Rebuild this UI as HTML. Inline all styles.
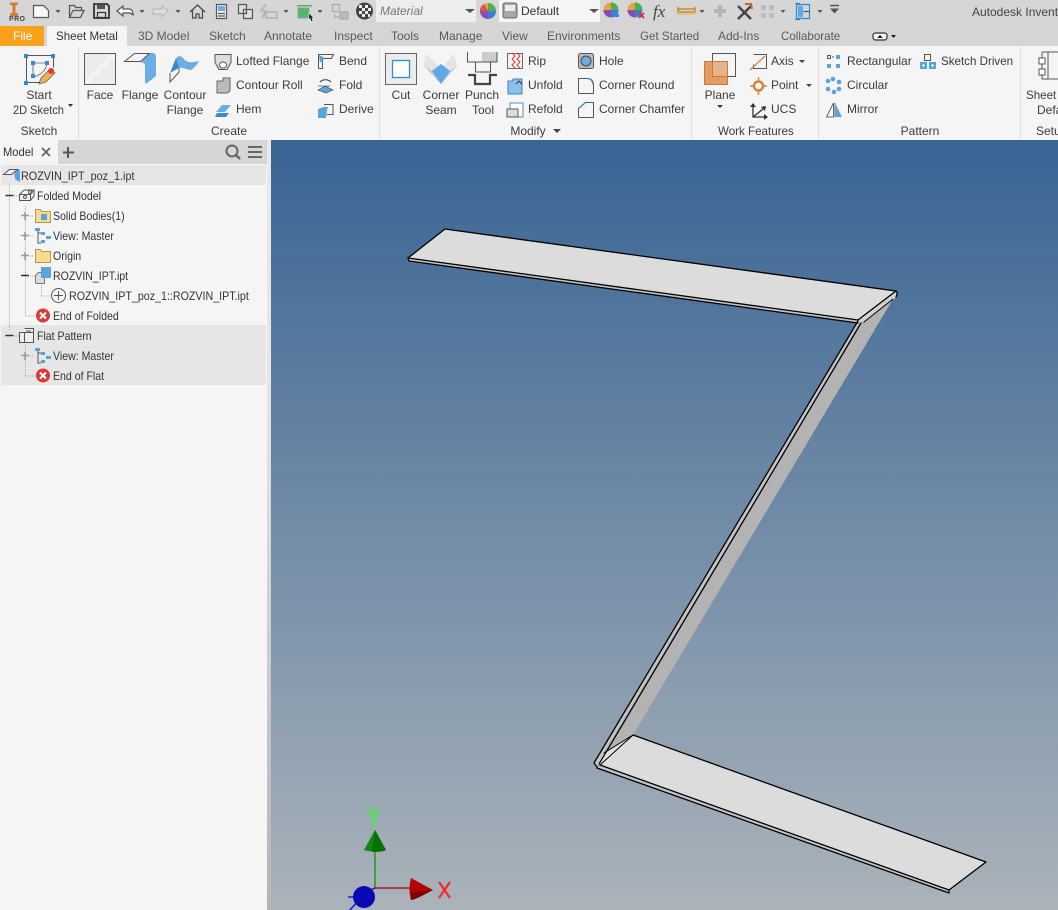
<!DOCTYPE html>
<html><head><meta charset="utf-8"><style>
html,body{margin:0;padding:0}
body{width:1058px;height:910px;overflow:hidden;position:relative;background:#f5f5f5;font-family:"Liberation Sans",sans-serif;font-size:12px;color:#3b3b3b}
.t{position:absolute;white-space:nowrap;line-height:14px;height:14px}
.c{transform:translateX(-50%)}
.g{color:#5a5a5a}
.a{position:absolute;left:0;top:0}
.s{transform:scaleX(.88);transform-origin:0 50%;color:#333}
.q{transform:scaleX(.965);transform-origin:0 50%}
</style></head><body>
<div style="position:absolute;left:0;top:0;width:1058px;height:46px;background:#d6d6d6"></div>
<div style="position:absolute;left:0;top:46px;width:1058px;height:94px;background:#f5f5f5"></div>
<div style="position:absolute;left:0;top:26px;width:44px;height:20px;background:#f9a11b"></div>
<div style="position:absolute;left:47px;top:26px;width:80px;height:20px;background:#f5f5f5"></div>
<div style="position:absolute;left:376px;top:0;width:100px;height:22px;background:#ededed"></div>
<div style="position:absolute;left:499px;top:0;width:101px;height:22px;background:#f5f5f5"></div>
<span class="t" style="left:380px;top:4px;font-style:italic;color:#777">Material</span>
<span class="t" style="left:521px;top:4px;color:#333">Default</span>
<span class="t" style="left:972px;top:5px;color:#444">Autodesk Invent</span>
<span class="t" style="left:13px;top:29px;color:#fff">File</span>
<span class="t q" style="left:56px;top:29px;color:#333">Sheet Metal</span>
<span class="t g" style="left:138px;top:29px">3D Model</span>
<span class="t g" style="left:209px;top:29px">Sketch</span>
<span class="t g" style="left:264px;top:29px">Annotate</span>
<span class="t g" style="left:334px;top:29px">Inspect</span>
<span class="t g" style="left:391px;top:29px">Tools</span>
<span class="t g" style="left:439px;top:29px">Manage</span>
<span class="t g" style="left:502px;top:29px">View</span>
<span class="t g" style="left:547px;top:29px">Environments</span>
<span class="t g q" style="left:640px;top:29px">Get Started</span>
<span class="t g" style="left:718px;top:29px">Add-Ins</span>
<span class="t g q" style="left:781px;top:29px">Collaborate</span>
<span class="t" style="left:9px;top:16px;font-size:7px;font-weight:bold;color:#444;line-height:8px;height:8px;letter-spacing:.4px">PRO</span>

<svg class="a" width="1058" height="140" viewBox="0 0 1058 140">
<path d="M10 2.500h8v2.500h-2.500v8h2.500v3h-8v-3h2.500v-8h-2.500z" fill="#cf7f33"/>
<g fill="none" stroke="#555" stroke-width="1.200">
<path d="M33.500 5.500h10l5 5v7h-15z" fill="#f7f7f7"/>
<path d="M69.500 17.500v-12h5l1 2h6v3M69.500 17.500h11l3.500-7h-11z"/>
<path d="M94 4h13l2 2v12h-15z" stroke="#333" stroke-width="1.800"/>
<path d="M97 5h8v4h-8z" fill="#555" stroke="none"/><path d="M97.500 12.500h8v5h-8z" fill="#ddd" stroke="#333"/>
<path d="M117 11l6-5v3h6c3 0 4 2 4 6-2-2-3-2-4-2h-6v3z" fill="#f5f5f5"/>
<path d="M168 11l-6-5v3h-9v5h9v3z" fill="#ddd" stroke="#bbb"/>
<path d="M190 12l7.500-7 7.500 7M192.500 10.500v7.500h3.500v-4h3v4h3.500v-7.500" stroke="#444"/>
<path d="M216.500 4.500h10v14h-10z" fill="#f0f0f0"/><path d="M218 6h7v5h-7z" fill="#6aaee4" stroke="none"/><path d="M218 13.500h7M218 16h7"/>
<path d="M238.500 4.500h8v9h-8zM243.500 9.500h9v9h-9z" fill="#ddd"/>
<path d="M266 4l-5 7h4l-3 7 4-5" stroke="#bbb" stroke-width="2"/><path d="M266 12h11v6h-11z" stroke="#aaa"/>
<path d="M297 5h15v1.500h-15z" fill="#54b46a" stroke="none"/><path d="M297.500 7.500h12v11h-12z" fill="#54b46a" stroke="#bbb"/>
<path d="M309 13l5 5-2 0 1 3-2 .5-1-3-1.500 1.500z" fill="#222" stroke="#eee" stroke-width=".6"/>
<path d="M332.500 4.500h7v7h-7z" stroke="#aaa"/><path d="M340 12h8v7h-8z" fill="#bbb" stroke="#aaa"/><path d="M335 14v3h4" stroke="#aaa"/>
<path d="M678 9h17M678 7v5h17v-5" stroke="#c98a2a" stroke-width="1.500"/><path d="M678 12v2h17v-2" stroke="#e0b060" stroke-width="1"/>
<path d="M796.500 4.500h13v14h-13zM795 3.500h5M795 19.500h5" stroke="#2f8bd6"/><path d="M798 6h5v11h-5z" fill="#5ba9e6" stroke="none"/><path d="M803.500 11.500h6" stroke="#555"/>
<path d="M830 5.500h9" stroke-width="1.500"/>
</g>
<g fill="#555">
<path d="M55.500 10h5l-2.500 3zM139.500 10h5l-2.500 3zM175.500 10h5l-2.500 3zM283.500 10h5l-2.500 3zM317.500 10h5l-2.500 3zM699.500 10h5l-2.500 3zM780.500 10h5l-2.500 3zM817.500 10h5l-2.500 3zM830 8.500h9l-4.500 5zM465 9h10l-5 4zM589 9h10l-5 4z"/>
</g>
<g>
<circle cx="488" cy="11" r="8" fill="#e8a33c"/><path d="M488 11V3A8 8 0 0 1 496 11z" fill="#4bb04f"/><path d="M488 11h8A8 8 0 0 1 488 19z" fill="#3a7fd5"/><path d="M488 11v8A8 8 0 0 1 480 11z" fill="#8a4db0"/><path d="M488 11h-8A8 8 0 0 1 484 4z" fill="#e05050"/>
<circle cx="611" cy="10" r="7.500" fill="#e8a33c"/><path d="M611 10V2.500A7.500 7.500 0 0 1 618.500 10z" fill="#4bb04f"/><path d="M611 10h7.500A7.500 7.500 0 0 1 611 17.500z" fill="#3a7fd5"/><path d="M611 10v7.500A7.500 7.500 0 0 1 603.500 10z" fill="#8a4db0"/><rect x="614" y="14" width="5" height="3" fill="#2f8bd6"/>
<circle cx="635" cy="10" r="7.500" fill="#e8a33c"/><path d="M635 10V2.500A7.500 7.500 0 0 1 642.500 10z" fill="#4bb04f"/><path d="M635 10h7.500A7.500 7.500 0 0 1 635 17.500z" fill="#3a7fd5"/><path d="M635 10v7.500A7.500 7.500 0 0 1 627.500 10z" fill="#8a4db0"/><path d="M639 13l5 5M644 13l-5 5" stroke="#d9302a" stroke-width="1.800"/>
<rect x="503" y="3" width="14" height="15" rx="2" fill="#a8a8a8" stroke="#666"/><rect x="505" y="5" width="10" height="6" fill="#ececec"/>
<circle cx="364.500" cy="11" r="8.500" fill="#444"/><path d="M359 5h3v3h-3zM365 5h3v3h-3zM362 8h3v3h-3zM368 8h3v3h-3zM359 11h3v3h-3zM365 11h3v3h-3zM362 14h3v3h-3zM368 14h2v3h-2z" fill="#eee"/>
<path d="M714 11h12M720 5v12" stroke="#b5b5b5" stroke-width="4"/>
<path d="M738 6l13 13" stroke="#444" stroke-width="2.500"/><path d="M751 6l-13 13" stroke="#444" stroke-width="2.500"/><path d="M745 4h6l1 5" stroke="#c06a2a" stroke-width="2" fill="none"/>
<path d="M761 5h5v5h-5zM769 5h5v5h-5zM761 13h5v5h-5zM769 13h5v5h-5z" fill="#bdbdbd"/>
</g>
<text x="653" y="17" font-family="Liberation Serif,serif" font-style="italic" font-size="17" fill="#444">fx</text>
<rect x="873" y="33" width="14" height="7" rx="2.500" fill="#f5f5f5" stroke="#333" stroke-width="1.200"/><path d="M877 38h6l-3-3zM891 35h5l-2.500 3z" fill="#222"/>

<path d="M78.500 47v92M379.500 47v92M691.500 47v92M818.500 47v92M1020.500 47v92" stroke="#ddd"/>

<!-- Start 2D sketch -->
<path d="M26.500 55.500h27v12M26.500 55.500v27h15" fill="none" stroke="#555"/>
<path d="M33 63v14h0M47 63c-1 8-6 12-14 14" fill="none" stroke="#777"/><path d="M33 63h14" stroke="#888"/>
<path d="M24 54h4v4h-4zM51 54h4v4h-4zM24 81h4v4h-4zM31 61h4v4h-4zM45 61h4v4h-4zM31 74h4v4h-4z" fill="#2f8bd6"/>
<path d="M39 84l2-6 9-9 5 4-9 9z" fill="#e6b45a" stroke="#555" stroke-width=".7"/><circle cx="51" cy="71" r="3" fill="#e33"/>
<path d="M68 104h5l-2.500 3z" fill="#333"/>

<!-- Face / Flange / Contour -->
<rect x="84.500" y="53.500" width="31" height="31" fill="#ececec" stroke="#555"/><path d="M85 81l27-27h3v3l-27 27z" fill="#f5f5f5"/>
<path d="M140 62l10-9h3c2 0 3 2 3 4v19l-10 8-1-2 0-16c0-2-2-4-5-4z" fill="#6aaee4"/>
<path d="M124.500 61.500l10-8h15l-9 8z" fill="#f5f5f5" stroke="#555"/>
<path d="M176 58c3-3 5-2 7 0 4 5 8 5 16 3-2 4-5 7-8 9-4 0-8-3-12-2z" fill="#6aaee4"/>
<path d="M170 73l6-15 3 10-9 5z" fill="#3f86c4"/>
<path d="M170 73v9l9-10v-4" fill="#f5f5f5" stroke="#555"/>

<!-- small create icons -->
<path d="M215 54.500h16v8l-4 7h-8l-4-7z" fill="#ddd" stroke="#555"/><ellipse cx="223" cy="65" rx="3.500" ry="3" fill="#fff" stroke="#555"/>
<path d="M217 81h6v-3h7v13l-3 2h-10z" fill="#bbb" stroke="#666"/>
<path d="M216 112l6-7h9l-6 7z" fill="#6aaee4"/><path d="M215 117l2-4h12l-3 4z" fill="#3f86c4"/>
<path d="M318.500 54.500h15l-2 4h-9v10h-4z" fill="#f5f5f5" stroke="#555"/><path d="M319 55l6 3-5 5z" fill="#5ba3dc"/>
<path d="M320 82a7 6 0 0 1 11 0" fill="none" stroke="#333"/><path d="M318 86h12M318 90l7-4 8 4-7 3z" fill="#5ba3dc" stroke="#555" stroke-width=".7"/>
<path d="M324 104.500h9v10h-6" fill="none" stroke="#555"/><path d="M324 107l4 0-1 3 -1 8h-8v-9z" fill="#5ba3dc"/>

<!-- Cut / seam / punch -->
<rect x="385.500" y="53.500" width="31" height="31" fill="#ececec" stroke="#666"/>
<rect x="392.500" y="60.500" width="17" height="17" fill="#fff" stroke="#2f8bd6" stroke-width="1.300"/>
<path d="M426 54l15 15 13-15 3 12-16 18-17-18z" fill="#c8c8c8"/><path d="M426 54l-2 12 8 5 9-2zM454 54l3 12-7 5-9-2z" fill="#e4e4e4"/>
<path d="M432 71l9-7 9 7-9 13z" fill="#5ba9e6"/>
<rect x="482" y="52" width="15" height="10" fill="#ccc"/>
<path d="M467.500 52v10h29.500v-10M475.500 62v10h15v-10" fill="none" stroke="#555"/>
<path d="M468 75h7v9h15v-9h7" fill="none" stroke="#444" stroke-width="2.200"/>

<!-- Rip etc -->
<rect x="507.500" y="53.500" width="15" height="15" fill="#f5f5f5" stroke="#666"/><path d="M512 53l3 3-3 3 3 3-3 3 3 3M517 53l3 3-3 3 3 3-3 3 3 3" fill="none" stroke="#d33"/>
<path d="M508 81h5v-2h9v15h-14z" fill="#8cc0ea" stroke="#3f86c4"/><path d="M516 84l3-3 3 3" fill="none" stroke="#333"/>
<path d="M510 103h13v14h-13z" fill="#fff" stroke="#4a90d0"/><path d="M507 109h11v8h-11z" fill="#ddd" stroke="#555"/>

<rect x="578.500" y="53.500" width="15" height="15" rx="2" fill="#bbb" stroke="#555"/><circle cx="586" cy="61" r="5" fill="#6aaee4" stroke="#444"/>
<path d="M578.500 93.500v-15h9c4 0 6 3 6 6v9z" fill="#f5f5f5" stroke="#555"/><path d="M587 78.500c4 0 6 3 6 6" fill="none" stroke="#2f8bd6" stroke-width="1.300"/>
<path d="M578.500 117.500v-9l7-6h8v15z" fill="#f5f5f5" stroke="#555"/><path d="M578.500 108.500l7-6" stroke="#2f8bd6" stroke-width="1.300"/>

<!-- Modify arrow -->
<path d="M553 129h8l-4 4z" fill="#444"/>

<!-- Plane -->
<rect x="712.500" y="53.500" width="23" height="23" fill="none" stroke="#555"/>
<rect x="704.500" y="61.500" width="23" height="23" fill="#e59b62" stroke="#c77b3a"/>
<rect x="712.500" y="61.500" width="15" height="15" fill="#e4b48e" stroke="#c77b3a"/>
<path d="M717 105h6l-3 3z" fill="#333"/>
<!-- Axis -->
<path d="M753.500 54.500h13v14h-13v-4" fill="none" stroke="#555"/><path d="M750 70l15-14" stroke="#d9823a" stroke-width="1.300"/>
<path d="M799 60h6l-3 3zM806 84h6l-3 3z" fill="#444"/>
<path d="M750 86h4M763 86h4M758.500 77v5M758.500 90v5" stroke="#d9823a" stroke-width="1.500"/><circle cx="758.500" cy="86" r="4.500" fill="#fff" stroke="#d9823a" stroke-width="2.500"/>
<path d="M753 104v13h13M753 117l10-8" fill="none" stroke="#333" stroke-width="1.300"/><path d="M750 107l3-4 3 4zM764 114l4 3-4 3zM761 107l5-1-1 5z" fill="#333"/>

<!-- Pattern icons -->
<g fill="#5ba3dc"><rect x="827.500" y="55.500" width="3" height="3" fill="none" stroke="#555"/><rect x="836" y="55" width="4" height="4"/><rect x="827" y="64" width="4" height="4"/><rect x="836" y="64" width="4" height="4"/>
<rect x="832" y="56.500" width="2" height="1" fill="#555"/><circle cx="833" cy="79" r="2.300"/><circle cx="839" cy="82" r="2.300"/><circle cx="828" cy="81" r="2.300"/><circle cx="839" cy="89" r="2.300"/><circle cx="834" cy="92" r="2.300"/><circle cx="828" cy="89" r="2.300"/>
<rect x="920" y="62" width="7" height="7"/><rect x="929" y="62" width="7" height="7"/></g>
<path d="M922 65.500h3M923.500 64v3M931 65.500h3M932.500 64v3" stroke="#fff"/>
<rect x="924.500" y="54.500" width="6" height="6" fill="none" stroke="#555"/>
<path d="M833.500 103v14h-7zM835 103v14" fill="#fff" stroke="#666"/><path d="M835 103l7 14h-7z" fill="#5ba3dc"/>

<!-- Sheet defaults -->
<path d="M1042 52h16M1042 52v27h16M1048 52v27" fill="none" stroke="#555"/><rect x="1039" y="58" width="6" height="6" fill="#fff" stroke="#555"/><rect x="1039" y="69" width="6" height="6" fill="#fff" stroke="#555"/>
</svg>

<span class="t c" style="left:39px;top:88px">Start</span>
<span class="t" style="left:13px;top:103px;transform:scaleX(.92);transform-origin:0 50%">2D Sketch</span>
<span class="t c" style="left:39px;top:124px">Sketch</span>
<span class="t c" style="left:100px;top:88px">Face</span>
<span class="t c" style="left:140px;top:88px">Flange</span>
<span class="t c" style="left:185px;top:88px">Contour</span>
<span class="t c" style="left:185px;top:103px">Flange</span>
<span class="t" style="left:236px;top:54px">Lofted Flange</span>
<span class="t" style="left:236px;top:78px">Contour Roll</span>
<span class="t" style="left:236px;top:102px">Hem</span>
<span class="t" style="left:339px;top:54px">Bend</span>
<span class="t" style="left:339px;top:78px">Fold</span>
<span class="t" style="left:339px;top:102px">Derive</span>
<span class="t c" style="left:229px;top:124px">Create</span>
<span class="t c" style="left:401px;top:88px">Cut</span>
<span class="t c" style="left:441px;top:88px">Corner</span>
<span class="t c" style="left:441px;top:103px">Seam</span>
<span class="t c" style="left:482px;top:88px">Punch</span>
<span class="t c" style="left:483px;top:103px">Tool</span>
<span class="t" style="left:528px;top:54px">Rip</span>
<span class="t" style="left:528px;top:78px">Unfold</span>
<span class="t" style="left:528px;top:102px">Refold</span>
<span class="t" style="left:599px;top:54px">Hole</span>
<span class="t" style="left:599px;top:78px">Corner Round</span>
<span class="t" style="left:599px;top:102px">Corner Chamfer</span>
<span class="t c" style="left:528px;top:124px">Modify</span>
<span class="t c" style="left:720px;top:88px">Plane</span>
<span class="t" style="left:771px;top:54px">Axis</span>
<span class="t" style="left:771px;top:78px">Point</span>
<span class="t" style="left:771px;top:102px">UCS</span>
<span class="t" style="left:718px;top:124px;transform:scaleX(.965);transform-origin:0 50%">Work Features</span>
<span class="t" style="left:847px;top:54px">Rectangular</span>
<span class="t" style="left:847px;top:78px">Circular</span>
<span class="t" style="left:847px;top:102px">Mirror</span>
<span class="t q" style="left:941px;top:54px">Sketch Driven</span>
<span class="t c" style="left:920px;top:124px">Pattern</span>
<span class="t q" style="left:1026px;top:88px">Sheet</span>
<span class="t" style="left:1037px;top:103px">Defa</span>
<span class="t" style="left:1036px;top:124px">Setu</span>

<!-- Left panel -->
<div style="position:absolute;left:0;top:140px;width:267px;height:770px;background:#f5f5f5"></div>
<div style="position:absolute;left:58px;top:140px;width:209px;height:24px;background:#d6d6d6"></div>
<div style="position:absolute;left:1px;top:165px;width:265px;height:20px;background:#e6e6e6"></div>
<div style="position:absolute;left:1px;top:325px;width:265px;height:60px;background:#e6e6e6"></div>
<div style="position:absolute;left:267px;top:140px;width:4px;height:770px;background:linear-gradient(#e8e8e8 0,#e4e4e4 35%,#b4b4b4 100%)"></div>
<span class="t" style="left:3px;top:145px;color:#333;transform:scaleX(.93);transform-origin:0 50%">Model</span>
<span class="t" style="left:21px;top:169px;color:#333;transform:scaleX(.9);transform-origin:0 50%">ROZVIN_IPT_poz_1.ipt</span>
<span class="t s" style="left:37px;top:189px">Folded Model</span>
<span class="t s" style="left:53px;top:209px">Solid Bodies(1)</span>
<span class="t s" style="left:53px;top:229px">View: Master</span>
<span class="t s" style="left:53px;top:249px">Origin</span>
<span class="t s" style="left:53px;top:269px">ROZVIN_IPT.ipt</span>
<span class="t" style="left:69px;top:289px;color:#333;transform:scaleX(.89);transform-origin:0 50%">ROZVIN_IPT_poz_1::ROZVIN_IPT.ipt</span>
<span class="t s" style="left:53px;top:309px">End of Folded</span>
<span class="t s" style="left:37px;top:329px">Flat Pattern</span>
<span class="t s" style="left:53px;top:349px">View: Master</span>
<span class="t s" style="left:53px;top:369px">End of Flat</span>

<svg class="a" style="top:140px" width="268" height="260" viewBox="0 140 268 260">
<path d="M42 148l8 8M50 148l-8 8" stroke="#666" stroke-width="1.800"/>
<path d="M68 147v11M63 152.500h11" stroke="#555" stroke-width="2"/>
<circle cx="232" cy="151" r="5.500" fill="none" stroke="#666" stroke-width="2"/><path d="M236 155l4 4" stroke="#666" stroke-width="2.500"/>
<path d="M248 147h14M248 152h14M248 157h14" stroke="#666" stroke-width="2"/>

<path d="M9.500 185V331M25.500 206V316h10M41.500 285V296h8M25.500 345V376h10M14 196h5M30 216h4M30 236h4M30 256h4M14 336h5M30 356h4M30 276h5" fill="none" stroke="#aaa" stroke-dasharray="1 1"/>
<path d="M5.500 195.500h8M5.500 335.500h8M21 275.500h8" stroke="#333" stroke-width="1.500"/>
<path d="M21 215.500h8M25 212v8M21 235.500h8M25 232v8M21 255.500h8M25 252v8M21 355.500h8M25 352v8" stroke="#999" stroke-width="1.500"/>

<path d="M14 169h4c1 0 2 1 2 2v11c-2-1-4-2-5-3z" fill="#5ba3dc"/><path d="M3.500 174.500l6-5h8l-6 5z" fill="#f0f0f0" stroke="#555"/>
<path d="M19.500 194.500h11v6h-11zM24 190h10v6l-3 4M19.500 194.500l4.500-4.500M30.500 194.500l3.500-4.500" fill="#eee" stroke="#555"/><circle cx="25" cy="197" r="1.500" fill="none" stroke="#555"/><circle cx="30" cy="192" r="1.500" fill="none" stroke="#555"/>
<path d="M35.500 209.500h5l1 2h9v11h-15z" fill="#f5dc8f" stroke="#b59a4a"/><rect x="41" y="214" width="6" height="6" fill="#5ba3dc"/>
<path d="M35.500 249.500h5l1 2h9v11h-15z" fill="#f5dc8f" stroke="#b59a4a"/>
<g><rect x="35" y="228" width="5" height="3" fill="#5ba3dc"/><rect x="41" y="232" width="4" height="3" fill="#5ba3dc"/><rect x="46" y="236" width="5" height="3" fill="#5ba3dc"/><rect x="41" y="240" width="4" height="3" fill="#5ba3dc"/><path d="M38 231v12h3M38 233h3" fill="none" stroke="#555"/>
<rect x="35" y="348" width="5" height="3" fill="#5ba3dc"/><rect x="41" y="352" width="4" height="3" fill="#5ba3dc"/><rect x="46" y="356" width="5" height="3" fill="#5ba3dc"/><rect x="41" y="360" width="4" height="3" fill="#5ba3dc"/><path d="M38 351v12h3M38 353h3" fill="none" stroke="#555"/></g>
<path d="M35.500 282.500v-7l3-3h6v11h-8z" fill="#ddd" stroke="#777"/><path d="M41 267h10v11h-10z" fill="#5ba3dc"/>
<circle cx="58.500" cy="295.500" r="7" fill="#f5f5f5" stroke="#555"/><path d="M54 295.500h9M58.500 291v9" stroke="#555"/>
<circle cx="43" cy="315.500" r="7" fill="#d93a3a"/><path d="M40 312.500l6 6M46 312.500l-6 6" stroke="#fff" stroke-width="2"/>
<circle cx="43" cy="375.500" r="7" fill="#d93a3a"/><path d="M40 372.500l6 6M46 372.500l-6 6" stroke="#fff" stroke-width="2"/>
<path d="M19.500 332.500h14v10h-14zM24.500 328.500h9v14h-9M24.500 332.500v10M26 331h5" fill="#eee" stroke="#555"/>
</svg>

<!-- Viewport -->
<div style="position:absolute;left:271px;top:140px;width:787px;height:770px;background:linear-gradient(#386494,#abb3ba)"></div>
<svg class="a" width="1058" height="910" viewBox="0 0 1058 910" style="z-index:2">
<!-- fills -->
<g stroke="none" shape-rendering="crispEdges">
<path d="M408 258l37-29 451 62-38 29z" fill="#dcdcdc"/>
<path d="M408 258l1 3 449 62v-3z" fill="#c4c4c4"/>
<path d="M858 320l38-29c2 2 1 4 0 6l-3 3-29 22-6 1z" fill="#d2d2d2"/>
<path d="M858 322l-264 441 4 3 263-443z" fill="#c4c4c4"/>
<path d="M861 323l3-1 29-23-260 436-29 17z" fill="#b3b3b3"/>
<path d="M604 753l29-18-33 30-3 0z" fill="#e2e2e2"/>
<path d="M633 735l353 127-37 28-349-125z" fill="#dcdcdc"/>
<path d="M597 768l3-3 349 125v3z" fill="#c4c4c4"/>
</g>
<!-- edges -->
<g fill="none" stroke="#000" stroke-width="1.300" stroke-linejoin="round" stroke-linecap="round">
<path d="M408 258l37-29 451 62c2 2 1 4 0 6"/>
<path d="M408 258l450 62 38-29"/>
<path d="M408 258l1 3 449 62"/>
<path d="M864 322l29-23" stroke-width="1"/>
<path d="M858 321l-264 442 3 4"/>
<path d="M861 323L599 764"/>
<path d="M600 765l33-30M604 753l29-18" stroke-width="1"/>
<path d="M633 735l353 127-37 28-349-125"/>
<path d="M597 768l352 125v-3"/>
</g>

<path d="M375 851v37" stroke="#1f9a1f" stroke-width="1.500"/>
<path d="M375 888h37" stroke="#a31818" stroke-width="1.500"/>
<path d="M364 850c5 2 17 2 22 0l-11-20z" fill="#0d8a0d"/><path d="M375 830l-3 22c5 0 11 0 14-2z" fill="#067006"/>
<path d="M411 878c-2 8-2 15 0 22 6-1 14-6 22-10z" fill="#b40000"/><path d="M411 893c0 3 0 5 0 7 6-1 14-6 22-10z" fill="#7c0000"/>
<path d="M357 897h-9M359 900l-10 11M364 893l11-5" stroke="#1c1cf0" stroke-width="1.600" fill="none"/>
<circle cx="364" cy="897" r="11" fill="#0a0ab4"/>
<path d="M368 808l6 9 6-9M374 817v10" fill="none" stroke="#3cf23c" stroke-width="2.200"/>
<path d="M439 882l11 16M450 882l-11 16" stroke="#f02c2c" stroke-width="2.200"/>
</svg>
</body></html>
